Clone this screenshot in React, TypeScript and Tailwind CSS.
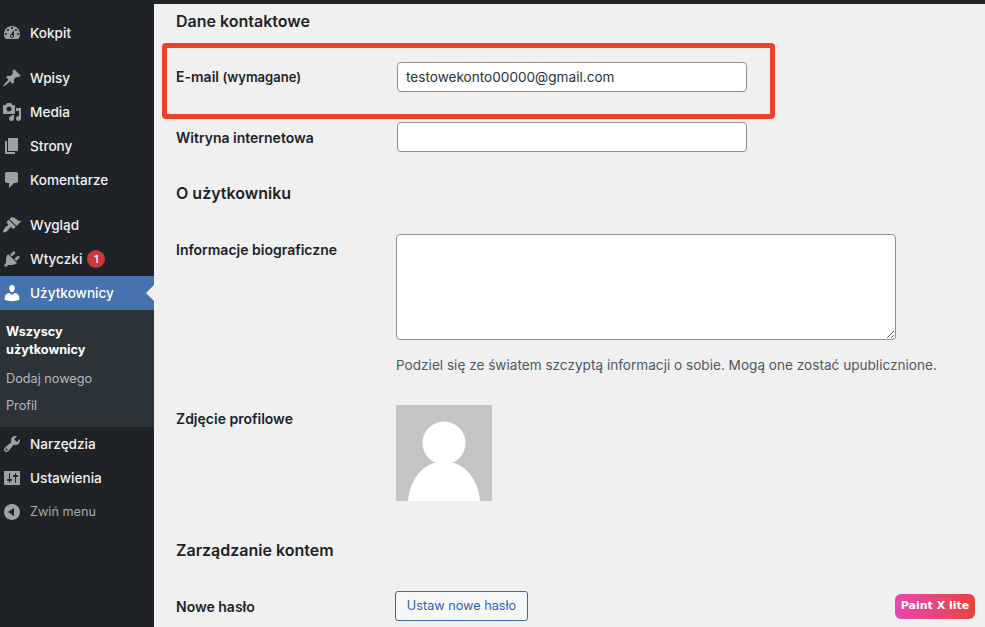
import React from 'react'

const icons: Record<string, string> = {
  dashboard: "M3.76 16h12.48c1.1-1.37 1.76-3.11 1.76-5 0-4.42-3.58-8-8-8s-8 3.58-8 8c0 1.89.66 3.63 1.76 5zM10 4c.55 0 1 .45 1 1s-.45 1-1 1-1-.45-1-1 .45-1 1-1zM6 6c.55 0 1 .45 1 1s-.45 1-1 1-1-.45-1-1 .45-1 1-1zm8 0c.55 0 1 .45 1 1s-.45 1-1 1-1-.45-1-1 .45-1 1-1zm-5.37 5.55L12 7v6c0 1.1-.9 2-2 2s-2-.9-2-2c0-.57.24-1.08.63-1.45zM4 10c.55 0 1 .45 1 1s-.45 1-1 1-1-.45-1-1 .45-1 1-1zm12 0c.55 0 1 .45 1 1s-.45 1-1 1-1-.45-1-1 .45-1 1-1zm-5 3c0-.55-.45-1-1-1s-1 .45-1 1 .45 1 1 1 1-.45 1-1z",
  post: "M10.44 3.02l1.82-1.82 6.36 6.35-1.83 1.82c-1.05-.68-2.48-.57-3.41.36l-.75.75c-.92.93-1.04 2.35-.35 3.41l-1.83 1.82-2.41-2.41-2.8 2.79c-.42.42-3.38 2.71-3.8 2.29s1.86-3.39 2.28-3.81l2.79-2.79L4.1 9.36l1.83-1.82c1.05.69 2.48.57 3.4-.36l.75-.75c.93-.92 1.05-2.35.36-3.41z",
  media: "M13 11V4c0-.55-.45-1-1-1h-1.67L9 1H5L3.67 3H2c-.55 0-1 .45-1 1v7c0 .55.45 1 1 1h10c.55 0 1-.45 1-1zM7 4.5c1.38 0 2.5 1.12 2.5 2.5S8.38 9.5 7 9.5 4.5 8.38 4.5 7 5.62 4.5 7 4.5zM14 6h5v10.5c0 1.38-1.12 2.5-2.5 2.5S14 17.88 14 16.5s1.12-2.5 2.5-2.5c.17 0 .34.02.5.05V9h-3V6zm-4 8.05V13h2v3.5c0 1.38-1.12 2.5-2.5 2.5S7 17.88 7 16.5 8.12 14 9.5 14c.17 0 .34.02.5.05z",
  page: "M6 15V2h10v13H6zm-1 1h8v2H3V5h2v11z",
  comments: "M5 2h9c1.1 0 2 .9 2 2v7c0 1.1-.9 2-2 2h-2l-5 5v-5H5c-1.1 0-2-.9-2-2V4c0-1.1.9-2 2-2z",
  appearance: "M14.48 11.06L7.41 3.99l1.5-1.5c.5-.56 2.3-.47 3.51.32 1.21.8 1.43 1.28 2.91 2.1 1.18.64 2.45 1.26 4.45.85zM13.77 11.77L6.7 4.7 4.93 6.47C4.54 6.86 4.54 7.49 4.93 7.88L5.99 8.94C6.38 9.33 6.38 9.97 5.99 10.36 5.39 10.96 4.56 11.47 3.78 12.05 3.43 12.31 3.08 12.58 2.77 12.89 1.6 14.1 1.1 15.8 1 17.47 2.7 17.37 4.4 16.87 5.58 15.7 5.89 15.39 6.16 15.04 6.42 14.69 7 13.91 7.51 13.08 8.11 12.48 8.53 12.09 9.14 12.09 9.53 12.48L10.59 13.54C10.98 13.93 11.61 13.93 12 13.54Z",
  plugins: "M13.11 4.36L9.87 7.6 8 5.73l3.24-3.24c.35-.34 1.05-.2 1.56.32.52.51.66 1.21.31 1.55zm-8 1.77l.91-1.12 9.01 9.01-1.19.84c-.71.71-2.63 1.16-3.82 1.16H6.14L4.9 17.26c-.59.59-1.54.59-2.12 0-.59-.58-.59-1.53 0-2.12l1.24-1.24v-3.88c0-1.13.4-3.19 1.09-3.89zm7.26 3.97l3.24-3.24c.34-.35 1.04-.21 1.55.31.52.51.66 1.21.31 1.55l-3.24 3.25z",
  users: "M10 9.25c-2.27 0-2.73-3.44-2.73-3.44C7 4.02 7.82 2 9.97 2c2.16 0 2.98 2.02 2.71 3.81 0 0-.41 3.44-2.68 3.44zm0 2.57L12.72 10c2.39 0 4.52 2.33 4.52 4.53v2.49s-3.65 1.13-7.24 1.13c-3.65 0-7.24-1.13-7.24-1.13v-2.49c0-2.25 1.94-4.48 4.47-4.48z",
  tools: "M16.68 9.77c-1.34 1.34-3.3 1.67-4.95.99l-5.41 6.52c-.99.99-2.59.99-3.58 0s-.99-2.59 0-3.57l6.52-5.42c-.68-1.65-.35-3.61.99-4.95 1.28-1.28 3.12-1.62 4.72-1.06l-2.89 2.89 2.82 2.82 2.86-2.87c.53 1.58.18 3.39-1.08 4.65zM3.81 16.21c.4.39 1.04.39 1.43 0 .4-.4.4-1.04 0-1.43-.39-.4-1.03-.4-1.43 0-.39.39-.39 1.03 0 1.43z",
  settings: "M18 16V4c0-.55-.45-1-1-1H3c-.55 0-1 .45-1 1v12c0 .55.45 1 1 1h14c.55 0 1-.45 1-1zM8 11h1c.55 0 1 .45 1 1s-.45 1-1 1H8v1.5c0 .28-.22.5-.5.5s-.5-.22-.5-.5V13H6c-.55 0-1-.45-1-1s.45-1 1-1h1V5.5c0-.28.22-.5.5-.5s.5.22.5.5V11zm5-2h-1c-.55 0-1-.45-1-1s.45-1 1-1h1V5.5c0-.28.22-.5.5-.5s.5.22.5.5V7h1c.55 0 1 .45 1 1s-.45 1-1 1h-1v5.5c0 .28-.22.5-.5.5s-.5-.22-.5-.5V9z",
  collapse: "M10 2c-4.42 0-8 3.58-8 8s3.58 8 8 8 8-3.58 8-8-3.58-8-8-8zm2 12l-6-4 6-4v8z",
}

function MenuIcon({ name, className }: { name: string; className?: string }) {
  return (
    <svg viewBox="0 0 20 20" className={`w-5 h-5 shrink-0 fill-current ${className ?? 'text-[#9ca1a7]'}`}>
      <path d={icons[name]} fillRule="evenodd" />
    </svg>
  )
}

function MenuItem({ icon, label, badge }: { icon: string; label: string; badge?: string }) {
  return (
    <div className="h-[34px] flex items-center pl-[2px] text-[#f0f0f1]">
      <MenuIcon name={icon} />
      <span className="ml-2 whitespace-nowrap">{label}</span>
      {badge && (
        <span className="ml-[5px] w-[18px] h-[18px] rounded-full bg-[#c83a38] text-white text-[11px] flex items-center justify-center">
          {badge}
        </span>
      )}
    </div>
  )
}

function Sidebar() {
  return (
    <aside className="w-[154px] shrink-0 bg-[#1f2327] pt-4 text-[13.6px] font-medium">
      <MenuItem icon="dashboard" label="Kokpit" />
      <div className="h-[11px]" />
      <MenuItem icon="post" label="Wpisy" />
      <MenuItem icon="media" label="Media" />
      <MenuItem icon="page" label="Strony" />
      <MenuItem icon="comments" label="Komentarze" />
      <div className="h-[11px]" />
      <MenuItem icon="appearance" label="Wygląd" />
      <MenuItem icon="plugins" label="Wtyczki" badge="1" />

      {/* Active section */}
      <div className="relative h-[34px] flex items-center pl-[2px] bg-[#4672b0] text-white">
        <MenuIcon name="users" className="text-white" />
        <span className="ml-2">Użytkownicy</span>
        <div className="absolute right-0 top-[9px] border-y-[8px] border-r-[8px] border-y-transparent border-r-[#f0f0f1]" />
      </div>
      <div className="bg-[#2c3338] h-[117px] pt-[13px] px-[6px] text-[12.7px] leading-[18px]">
        <div className="font-bold text-white">Wszyscy<br />użytkownicy</div>
        <div className="mt-[11px] text-[#b4b9be] font-normal">Dodaj nowego</div>
        <div className="mt-[9px] text-[#b4b9be] font-normal">Profil</div>
      </div>

      <MenuItem icon="tools" label="Narzędzia" />
      <MenuItem icon="settings" label="Ustawienia" />
      <div className="h-[34px] flex items-center pl-[2px] text-[#a7aaad] text-[12.7px] font-normal">
        <MenuIcon name="collapse" />
        <span className="ml-2">Zwiń menu</span>
      </div>
    </aside>
  )
}

function FieldLabel({ children }: { children: React.ReactNode }) {
  return <div className="w-[220px] shrink-0 text-[14px] font-semibold text-[#1d2327]">{children}</div>
}

function SectionTitle({ children, className }: { children: React.ReactNode; className: string }) {
  return <h2 className={`text-[16px] leading-[20px] font-semibold text-[#1d2327] ${className}`}>{children}</h2>
}

export default function App() {
  return (
    <div
      className="relative w-[985px] h-[627px] overflow-hidden flex bg-[#1f2327]"
      style={{ fontFamily: 'Inter, "Liberation Sans", sans-serif' }}
    >
      <Sidebar />
      <main className="flex-1 mt-1 bg-[#f0f0f1] pl-[22px]">
        <SectionTitle className="mt-[7px]">Dane kontaktowe</SectionTitle>

        <div className="mt-[31px] flex items-center h-[30px]">
          <FieldLabel>
            E-mail <span className="text-[13px]">(wymagane)</span>
          </FieldLabel>
          <input
            readOnly
            value="testowekonto00000@gmail.com"
            className="ml-px w-[350px] h-[30px] px-2 bg-white border border-[#8c8f94] rounded-[4px] text-[13.6px] text-[#2c3338] outline-none"
          />
        </div>
        <div className="mt-[30px] flex items-center h-[30px]">
          <FieldLabel>Witryna internetowa</FieldLabel>
          <input readOnly className="ml-px w-[350px] h-[30px] bg-white border border-[#8c8f94] rounded-[4px] outline-none" />
        </div>

        <SectionTitle className="mt-[31px]">O użytkowniku</SectionTitle>

        <div className="mt-[31px] flex">
          <FieldLabel><div className="mt-[5px]">Informacje biograficzne</div></FieldLabel>
          <div>
            <textarea
              readOnly
              className="block w-[500px] h-[106px] bg-white border border-[#8c8f94] rounded-[4px] outline-none"
            />
            <p className="mt-4 text-[13.6px] leading-[18px] text-[#50575e] whitespace-nowrap">
              Podziel się ze światem szczyptą informacji o sobie. Mogą one zostać upublicznione.
            </p>
          </div>
        </div>

        <div className="mt-[31px] flex">
          <FieldLabel><div className="mt-[3px]">Zdjęcie profilowe</div></FieldLabel>
          <svg viewBox="0 0 96 96" className="w-24 h-24 bg-[#c4c4c4]">
            <circle cx="48" cy="38" r="21.5" fill="#fff" />
            <path fill="#fff" d="M12 96C14 72 30 56 48 56s34 16 36 40z" />
          </svg>
        </div>

        <SectionTitle className="mt-[39px]">Zarządzanie kontem</SectionTitle>

        <div className="mt-[31px] flex items-center">
          <FieldLabel>Nowe hasło</FieldLabel>
          <button className="-ml-px h-[30px] w-[133px] rounded-[3px] border border-[#3a6ca8] bg-[#f6f7f7] text-[12.7px] text-[#2f67ab]">
            Ustaw nowe hasło
          </button>
        </div>
      </main>

      {/* Annotation drawn over the screenshot */}
      <div className="absolute left-[162px] top-[43px] w-[613px] h-[76px] border-[5px] border-[#ee4129] rounded-[4px]" />

      <div
        className="absolute left-[895px] top-[594px] w-[80px] h-[25px] rounded-[6px] bg-gradient-to-r from-[#e844b0] to-[#e94035] text-white text-[11px] font-bold flex items-center justify-center"
        style={{ fontFamily: '"DejaVu Sans", sans-serif' }}
      >
        Paint X lite
      </div>
    </div>
  )
}
